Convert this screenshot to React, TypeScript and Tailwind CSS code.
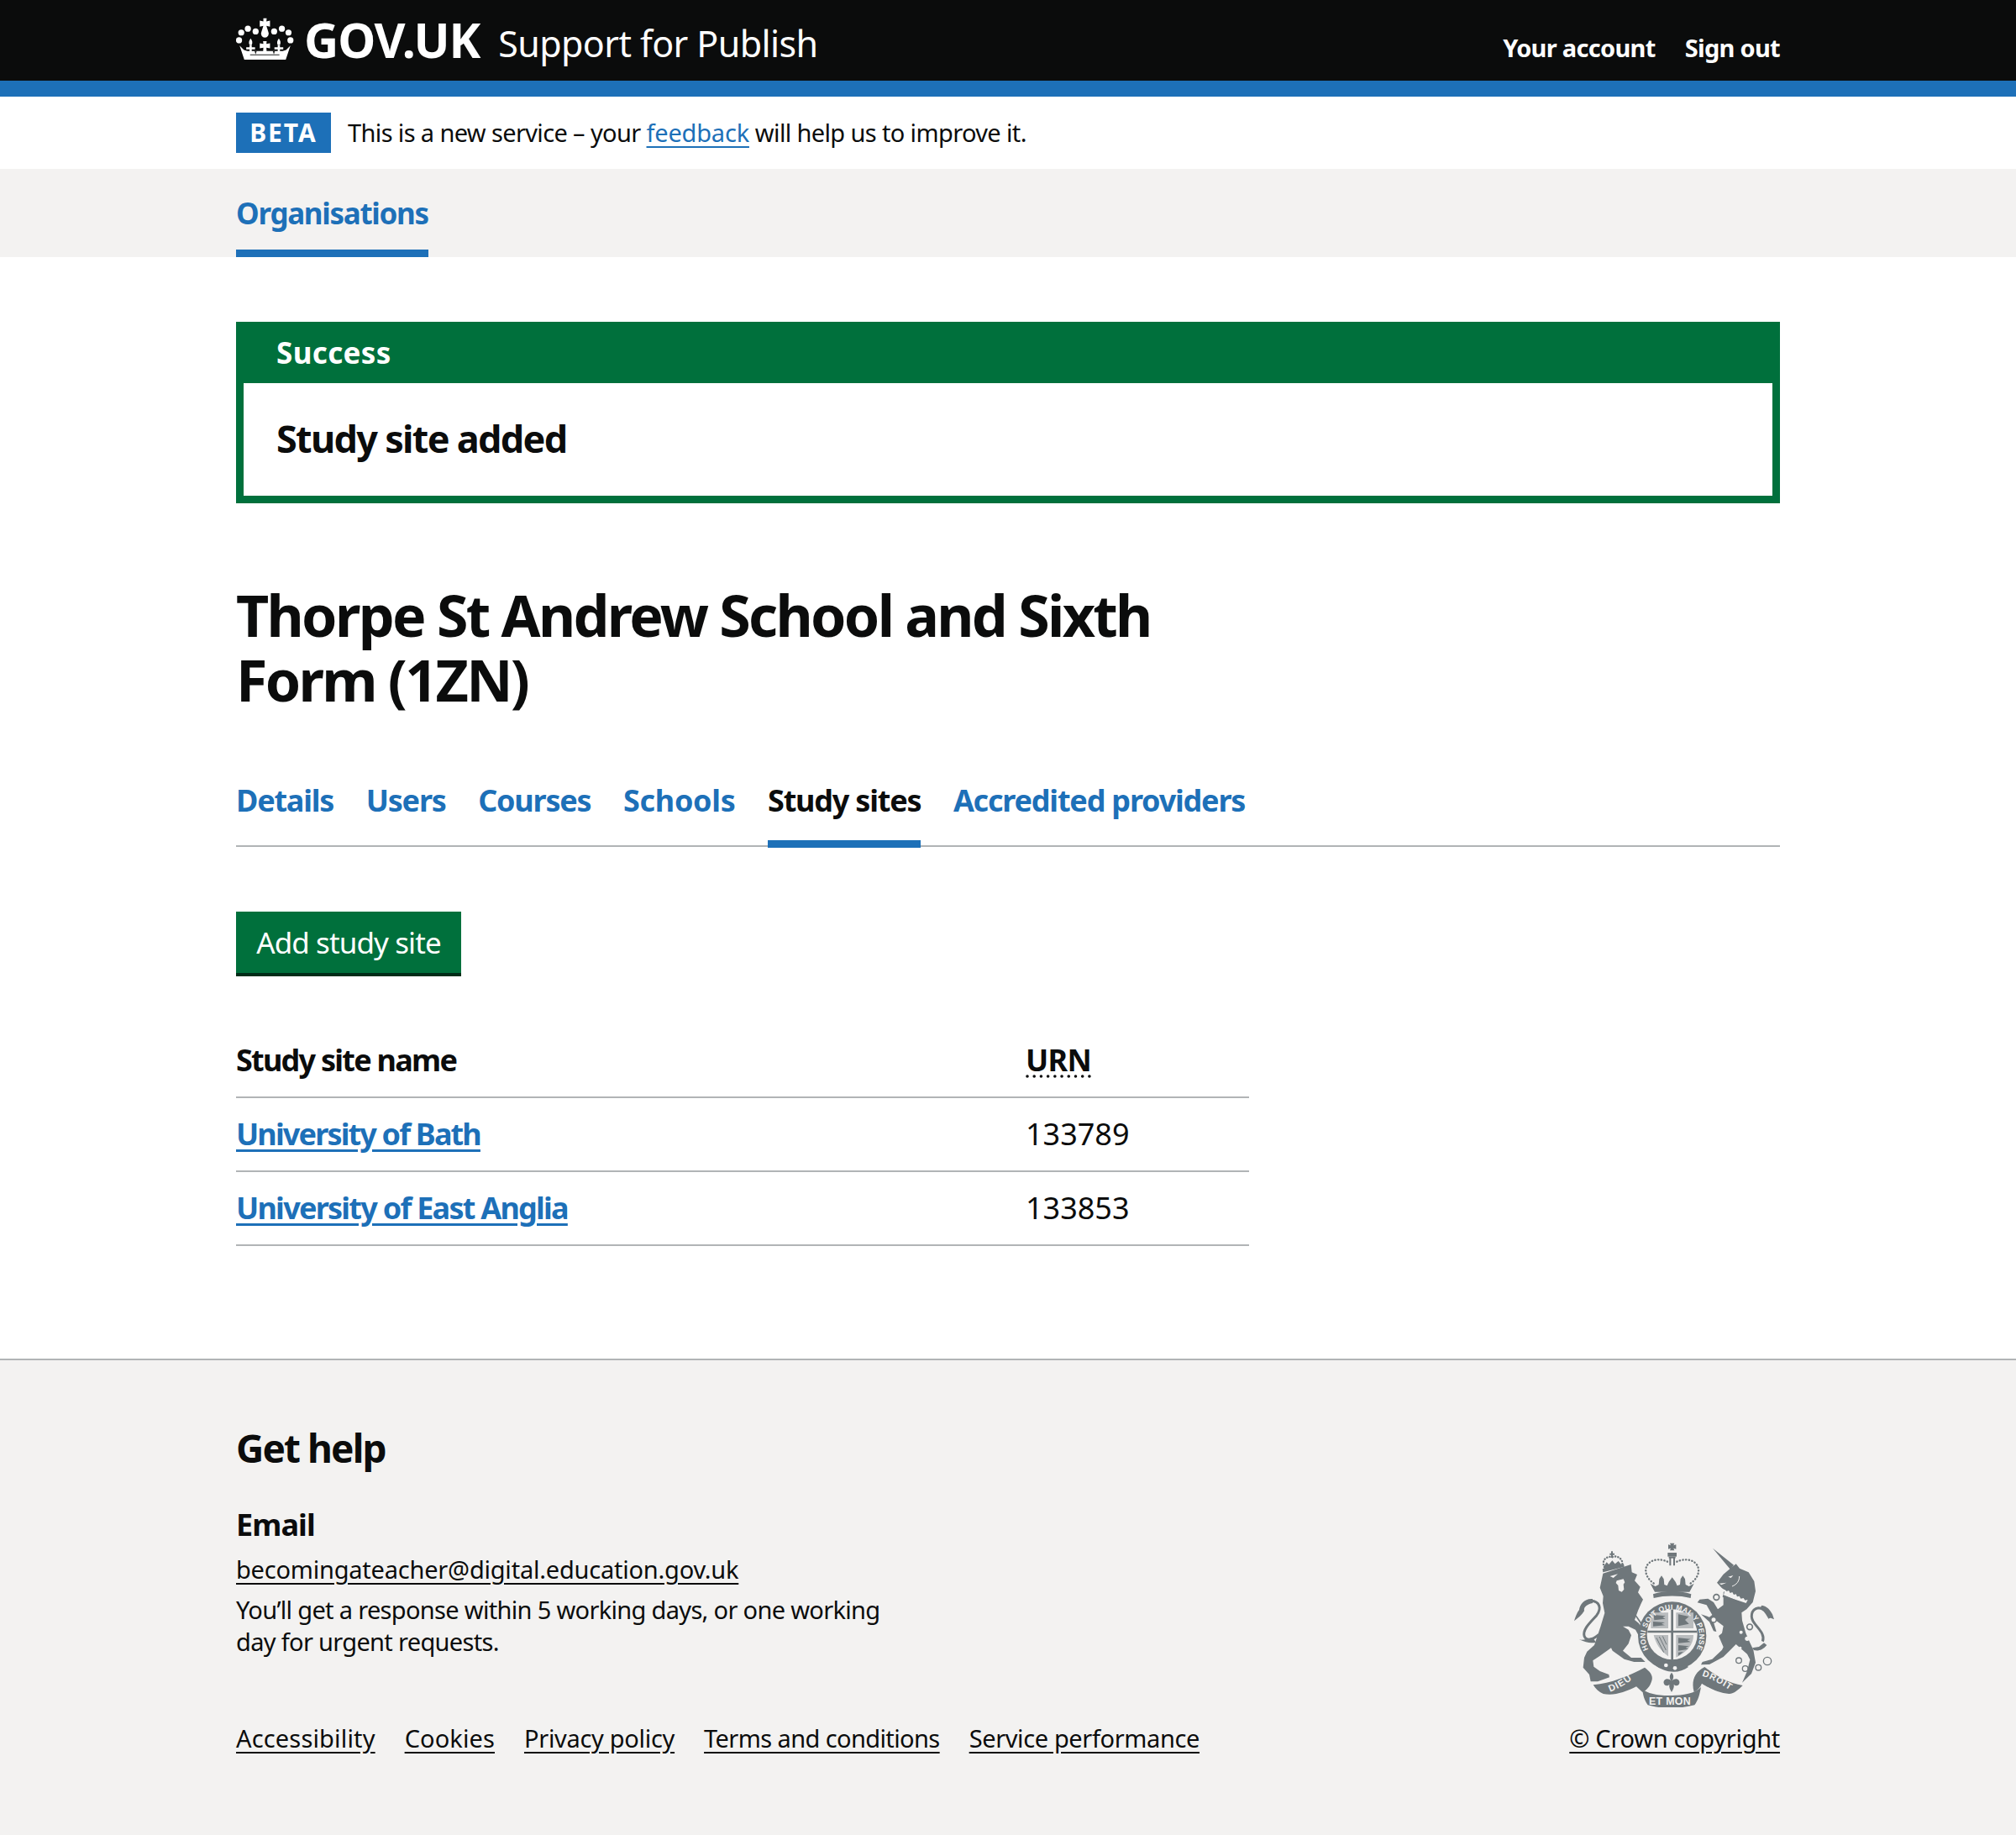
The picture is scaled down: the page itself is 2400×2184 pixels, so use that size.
const FONT = "font-['Noto_Sans',sans-serif]";

function CrownLogo() {
  return (
    <svg viewBox="18 10 208 155" className="w-[69px] h-[51px] shrink-0" fill="#fff">
      <path d="M116 15h12l-1 12 13-3v22l-13-3 7 22a14 14 0 1 1-25 0l7-22-13 3V24l13 3z" />
      <circle cx="88" cy="63" r="11" />
      <circle cx="60" cy="53" r="11" />
      <circle cx="36" cy="67" r="11" />
      <circle cx="28" cy="95" r="11" />
      <circle cx="155" cy="63" r="11" />
      <circle cx="183" cy="53" r="11" />
      <circle cx="207" cy="67" r="11" />
      <circle cx="214" cy="95" r="11" />
      <path d="M70 88c6 8 8 14 4 24h-8c-4-10-2-16 4-24zM172 88c6 8 8 14 4 24h-8c-4-10-2-16 4-24z" />
      <path d="M66 112h8v8h12v8H74v12h-8v-12H54v-8h12zM168 112h8v8h12v8h-12v12h-8v-12h-12v-8h12z" />
      <path d="M115 98h13l-1 10 13-2v18l-13-2 1 16h-13l1-16-13 2v-18l13 2z" />
      <path d="M30 114l16 16 12 4h128l12-4 16-16-17 51H47z" />
      <path fill="#0b0c0c" d="M84 134h8l-4 12zM150 134h8l-4 12zM68 146h106v3H68z" opacity=".9" />
    </svg>
  );
}

function RoyalArms() {
  return (
    <svg viewBox="0 0 747 600" className="w-[249px] h-[200px]" fill="#6f777b">
      <defs>
        <path id="garter" d="M298 420 A97 97 0 1 1 428 420" />
        <path id="dieu" d="M140 545 Q195 525 245 478" />
        <path id="droit" d="M468 488 Q522 505 582 548" />
      </defs>

      {/* lion */}
      <path d="M115 122L215 90l3 28 19 8-9 22 20 22-8 20 18 25-8 17-10 23-12 33 15 12 14 25 22 22-12 4-22-2-14-26-25-12-20 0 20 12 10 20-10 30-20 25 30 25 35 0 15 15-40 0-35-10-42-30-5-10-42 30-23 15 3 22 22 16 32 12 2 10-42 15-25 0-5-25-22-25 4-35 10-22 26-23 22-65 15-50-7-35 2-25-12-30z" />
      <path fill="none" stroke="#6f777b" strokeWidth="9" d="M100 340C78 360 55 365 48 345 42 320 72 295 92 272 112 245 102 222 72 220" />
      <path d="M78 213C50 210 32 232 30 252 22 262 16 278 12 292 28 280 40 270 48 256 45 240 60 232 78 228z" />
      <path d="M30 358c14 4 30-4 48-8l12 18c-18 4-34 2-60-10z" />
      <path fill="none" stroke="#6f777b" strokeWidth="5" d="M218 253l60 86" />
      <path fill="#f3f2f1" d="M140 132l28-8-16 14zM164 148l24-6 5 12-5 7 2 18-8 9-11-5-2-18-8-9z" />

      {/* lion crown */}
      <path fill="none" stroke="#6f777b" strokeWidth="7" strokeLinecap="round" strokeDasharray="1 9" d="M120 100c-12-24 8-42 28-36 14-8 38 4 36 24" />
      <path d="M139 50h5v-7h6v7h6v6h-6v10h-6v-10h-5z" />
      <path d="M118 96l10-14 8 8 12-14 10 12 12-10 12 14-2 8-60 14z" />
      <path d="M113 106l76-18 2 10-76 20z" />

      {/* royal crown */}
      <path d="M354 14h16l-3 8 9-3v16l-9-3 3 8h-16l3-8-9 3V19l9 3z" />
      <path d="M346 48h32v14h-32z" />
      <path d="M352 66h6v28h-6zM366 66h6v28h-6z" />
      <path d="M350 62h24v6h-24z" />
      <path fill="none" stroke="#6f777b" strokeWidth="7" strokeLinecap="round" strokeDasharray="1 10" d="M345 80c-20-10-55-12-72 12-14 24 2 52 24 66" />
      <path fill="none" stroke="#6f777b" strokeWidth="7" strokeLinecap="round" strokeDasharray="1 10" d="M379 80c20-10 55-12 72 12 14 24-2 52-24 66" />
      <path d="M284 158l18 10 12-6 2-20 8-12 8 12 2 20 10 4 6-14 12-16 12 16 6 14 10-4 2-20 8-12 8 12 2 20 12 6 18-10-16 30H300z" />
      <path d="M294 196c40-14 96-14 136 0l-2 14c-40-10-92-10-132 0z" />

      {/* garter and shield */}
      <circle cx="362" cy="345" r="122" />
      <circle cx="362" cy="340" r="90" fill="#f3f2f1" />
      <path d="M358 250h8v186h-8zM274 326h176v8H274z" />
      <path fill="#b9bcbe" d="M286 262h62v56h-62zM376 262h62v56h-62zM376 342h62c0 34-22 60-62 80zM296 342h52v76c-28-20-44-44-52-76z" />
      <path d="M296 270l42 4-10 5 10 5-40 5zM294 294l42 3-12 5 12 5-42 4zM384 268l38 8-14 12 14 14-38 8zM384 352l44 4-12 5 12 6-44 4zM384 378l38 4-12 5 10 5-36 6zM384 404l18-2-18 14z" />
      <path fill="none" stroke="#6f777b" strokeWidth="3" d="M306 352l26 52M316 348l24 48M328 346l14 30" />
      <text fontFamily="Liberation Sans, sans-serif" fontSize="26" fontWeight="700" fill="#f3f2f1" letterSpacing="1.200">
        <textPath href="#garter" startOffset="50%" textAnchor="middle">HONI SOIT QUI MAL Y PENSE</textPath>
      </text>

      {/* garter tail */}
      <path d="M290 430c8-14 22-14 32-4 24 22 56 34 88 22l10 8c-34 26-84 22-122-8z" />
      <circle cx="340" cy="450" r="7" fill="#f3f2f1" />
      <circle cx="372" cy="460" r="7" fill="#f3f2f1" />

      {/* unicorn */}
      <path d="M507 32L582 92L570 108Z" />
      <path d="M575 100L590 88L603 104L635 118L655 150L660 185L650 225L628 250L610 262L612 290L625 335L640 370L652 395L660 440L645 480L612 512L630 470L640 430L630 410L590 375L570 395L545 420L495 447L465 448L470 438L505 428L540 395L545 385L528 345L540 335L545 310L505 280L520 330L510 328L495 295L465 268L495 278L505 270L485 235L452 226L460 215L490 212L510 225L525 250L545 235L545 190L552 182L540 175L522 155L545 125Z" />
      <path fill="#f3f2f1" d="M562 134l18-5-8 9zM530 158l26-3-18 8z" />
      <path fill="none" stroke="#f3f2f1" strokeWidth="3" d="M602 132c0 18-10 30-26 36" />
      <path fill="#f3f2f1" d="M547 196l3-16 7 6 7-3 5 9 8-3 5 9 8-2 4 9 8-2 5 9 10-2 5 8 10-2-6 12-84-28z" />
      <path d="M544 198l90 38-4 8-88-38z" />
      <g fill="none" stroke="#6f777b" strokeWidth="4">
        <circle cx="600" cy="433" r="10" />
        <circle cx="623" cy="462" r="10" />
        <circle cx="670" cy="458" r="10" />
        <circle cx="702" cy="435" r="14" />
      </g>
      <circle cx="520" cy="207" r="10" fill="#f3f2f1" stroke="#6f777b" strokeWidth="5" />
      <circle cx="510" cy="287" r="10" fill="#f3f2f1" stroke="#6f777b" strokeWidth="5" />
      <circle cx="639" cy="313" r="10" fill="#f3f2f1" stroke="#6f777b" strokeWidth="5" />
      <circle cx="630" cy="355" r="8" fill="#f3f2f1" />
      <circle cx="605" cy="388" r="5" fill="#f3f2f1" />
      <circle cx="608" cy="332" r="6" fill="#f3f2f1" />
      <path fill="none" stroke="#6f777b" strokeWidth="9" d="M685 365C695 340 670 320 656 300 640 280 642 250 670 245 692 245 700 265 710 282" />
      <path d="M682 236c18 2 32 18 38 32l6 18-16-6-14-18-18-20z" />
      <path d="M700 378c-14 18-32 22-46 18l-6-8 24-4 18-14z" />

      {/* motto ribbons */}
      <path d="M80 520c64-6 126-32 184-62 16 12 30 26 26 44-6 24-20 38-34 44l-22-20c-40 20-80 34-118 26-16-6-28-18-36-32z" />
      <path d="M478 456C520 490 565 515 614 522C600 535 585 552 565 552C530 550 490 530 468 515C462 530 452 540 440 545C430 510 440 475 478 456Z" />
      <path d="M255 535C272 552 320 560 360 558C400 558 445 550 465 528C460 555 455 575 442 592C390 606 320 606 275 592C262 575 258 555 255 535Z" />
      <text fontFamily="Liberation Sans, sans-serif" fontSize="34" fontWeight="700" fill="#f3f2f1" letterSpacing="3">
        <textPath href="#dieu">DIEU</textPath>
      </text>
      <text fontFamily="Liberation Sans, sans-serif" fontSize="32" fontWeight="700" fill="#f3f2f1" letterSpacing="3">
        <textPath href="#droit">DROIT</textPath>
      </text>
      <text fontFamily="Liberation Sans, sans-serif" fontSize="37" fontWeight="700" fill="#f3f2f1" x="279" y="592" letterSpacing="1">ET MON</text>
      <path d="M360 476c-9 10-8 20-1 30-12-14-30-6-27 8 2 10 14 12 20 4-2 10 2 16 8 28 6-12 10-18 8-28 6 8 18 6 20-4 3-14-15-22-27-8 7-10 8-20-1-30z" />
    </svg>
  );
}

export default function App() {
  return (
    <div className={`${FONT} text-[#0b0c0c] bg-white min-h-[2184px] flex flex-col`}>
      {/* Header */}
      <header className="bg-[#0b0c0c] h-[115px] border-b-[19px] border-[#1d70b8] px-[281px] flex items-start justify-between text-white">
        <div className="flex items-start pt-[20px]">
          <CrownLogo />
          <span className="font-bold text-[57px] leading-[57px] tracking-[-1.100px] ml-[12px] -mt-[1px]">GOV.UK</span>
          <span className="text-[43px] leading-[57px] ml-[22px] mt-[3px] tracking-[-0.6px]">Support for Publish</span>
        </div>
        <nav className="flex gap-[35px] pt-[37px] font-bold text-[29px] leading-[40px] tracking-[-0.7px]">
          <a>Your account</a>
          <a>Sign out</a>
        </nav>
      </header>

      {/* Beta banner */}
      <div className="h-[86px] px-[281px] flex items-center">
        <strong className="bg-[#1d70b8] text-white text-[30px] leading-[48px] h-[48px] w-[113px] text-center tracking-[2px] mr-[20px]">BETA</strong>
        <p className="text-[29px] tracking-[-0.63px]">
          This is a new service – your <a className="text-[#1d70b8] underline underline-offset-[5px] tracking-[-0.2px]">feedback</a> will help us to improve it.
        </p>
      </div>

      {/* Primary nav */}
      <nav className="bg-[#f3f2f1] h-[105px] px-[281px]">
        <a className="inline-block h-[105px] border-b-[9px] border-[#1d70b8] text-[#1d70b8] font-bold text-[35px] leading-[105px] tracking-[-1.300px]">Organisations</a>
      </nav>

      <main className="px-[281px] pt-[77px] flex-1">
        {/* Notification */}
        <section className="bg-[#00703c] border-[9px] border-[#00703c]">
          <h2 className="h-[64px] pl-[39px] text-white font-bold text-[35px] leading-[56px] tracking-[0.35px]">Success</h2>
          <div className="bg-white h-[134px] pl-[39px] flex items-center">
            <p className="font-bold text-[45px] -mt-[2px] tracking-[-1.700px]">Study site added</p>
          </div>
        </section>

        <h1 className="font-bold text-[68px] leading-[76.500px] tracking-[-2.670px] w-[1206px] mt-[95px]">
          Thorpe St Andrew School and Sixth<br />Form (1ZN)
        </h1>

        {/* Sub navigation */}
        <nav className="mt-[61px] h-[100px] border-b-2 border-[#b1b4b6] flex gap-[38.500px] font-bold text-[36px] tracking-[-1.200px]">
          <a className="text-[#1d70b8] leading-[90px]">Details</a>
          <a className="text-[#1d70b8] leading-[90px]">Users</a>
          <a className="text-[#1d70b8] leading-[90px]">Courses</a>
          <a className="text-[#1d70b8] leading-[90px] tracking-[-0.3px]">Schools</a>
          <a className="leading-[90px] h-[101px] border-b-[9px] border-[#1d70b8]">Study sites</a>
          <a className="text-[#1d70b8] leading-[90px]">Accredited providers</a>
        </nav>

        <button className="block mt-[77px] bg-[#00703c] text-white text-[35px] w-[268px] h-[77px] border-b-[4px] border-[#002d18] leading-[70px] tracking-[-0.900px] text-center">Add study site</button>

        {/* Study sites table */}
        <table className="mt-[52px] w-[1206px] text-[36px]">
          <thead>
            <tr className="border-b-2 border-[#b1b4b6] h-[92px] text-left">
              <th className="w-[940px] font-bold tracking-[-1.750px] pt-[4px]">Study site name</th>
              <th className="font-bold tracking-[-0.7px] pt-[4px]"><abbr className="underline decoration-dotted underline-offset-[5px]">URN</abbr></th>
            </tr>
          </thead>
          <tbody>
            <tr className="border-b-2 border-[#b1b4b6] h-[88px]">
              <td><a className="text-[#1d70b8] font-bold underline underline-offset-[5px] tracking-[-1.850px]">University of Bath</a></td>
              <td>133789</td>
            </tr>
            <tr className="border-b-2 border-[#b1b4b6] h-[88px]">
              <td><a className="text-[#1d70b8] font-bold underline underline-offset-[5px] tracking-[-1.750px]">University of East Anglia</a></td>
              <td>133853</td>
            </tr>
          </tbody>
        </table>
      </main>

      {/* Footer */}
      <footer className="bg-[#f3f2f1] border-t-2 border-[#b1b4b6] h-[567px] px-[281px] pt-[74px]">
        <h2 className="font-bold text-[46px] leading-[60px] tracking-[-1.900px]">Get help</h2>
        <div className="flex justify-between items-end">
          <div>
            <h3 className="mt-[37px] font-bold text-[36px] leading-[50px] tracking-[-0.9px]">Email</h3>
            <p className="mt-[9px] text-[29px] leading-[38px] tracking-[-0.22px]"><a className="underline underline-offset-[5px]">becomingateacher@digital.education.gov.uk</a></p>
            <p className="mt-[10px] text-[29px] leading-[38px] tracking-[-0.68px] w-[790px]">You’ll get a response within 5 working days, or one working day for urgent requests.</p>
            <ul className="flex gap-[35px] mt-[77px] text-[29px] leading-[38px] underline underline-offset-[5px]">
              <li className="tracking-[0.16px]">Accessibility</li>
              <li className="tracking-[0.1px]">Cookies</li>
              <li className="tracking-[-0.3px]">Privacy policy</li>
              <li className="tracking-[-0.6px]">Terms and conditions</li>
              <li className="tracking-[-0.38px]">Service performance</li>
            </ul>
          </div>
          <div className="flex flex-col items-end">
            <RoyalArms />
            <a className="mt-[18px] text-[29px] leading-[38px] tracking-[-0.3px] underline underline-offset-[5px]">© Crown copyright</a>
          </div>
        </div>
      </footer>
    </div>
  );
}
